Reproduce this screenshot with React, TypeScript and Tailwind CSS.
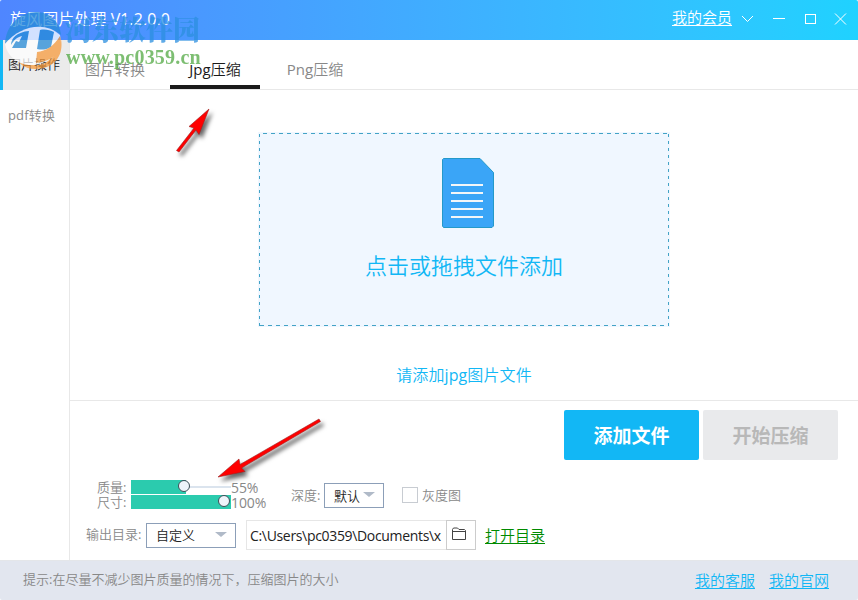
import { useState } from "react";

const tabs = [
  { name: "图片转换", width: "w-[90px]" },
  { name: "Jpg压缩", width: "w-[90px]" },
  { name: "Png压缩", width: "w-[110px]" },
];

const TitleBar = () => (
  <header className="flex h-10 shrink-0 items-center bg-linear-to-r from-[#4f86ff] to-[#1fd2ff] pl-[10px] text-white">
    <h1 className="mt-[-2px] text-[16px] leading-5 tracking-[0.080px]">旋风图片处理 V1.2.0.0</h1>
    <a href="#" className="mt-[-6px] mr-[10px] ml-auto text-[15px] leading-5 underline underline-offset-2">
      我的会员
    </a>
    <svg width="116" height="40" fill="none" stroke="currentColor" shapeRendering="crispEdges">
      <path d="M31 18.500h12M63.500 14.500h10v9h-10z" />
      <path d="M0 16l5.500 5.500L11 16M93 13.500l11 11M104 13.500l-11 11" shapeRendering="auto" />
    </svg>
  </header>
);

const Sidebar = () => (
  <nav className="w-[70px] shrink-0 border-r border-[#e8e8e8] text-[13px]">
    <div className="flex h-[50px] items-center border-l-3 border-[#12b7f5] bg-[#ebebeb] pl-[5px] text-[#1a1a1a]">
      图片操作
    </div>
    <div className="flex h-[50px] items-center pt-px pl-2 tracking-[0.150px] text-[#888]">pdf转换</div>
  </nav>
);

const DropZone = () => (
  <div className="relative mt-[42px] ml-[188px] flex h-[195px] w-[412px] flex-col items-center bg-[#f0f7ff]">
    <svg className="absolute inset-0" width="412" height="195" stroke="#43a3c6" shapeRendering="crispEdges">
      <path d="M5 1.500H411M2 193.500H411" strokeDasharray="4 4" />
      <path d="M1.500 2V194M410.500 2V194" strokeDasharray="3 4" />
    </svg>
    <svg className="mt-[26px] ml-2" width="52" height="70">
      <path d="M1.500 .5h36.500l13.500 14v53.500l-1.500 1.500h-48.500l-1-1.500V1.500z" fill="#3aa5f7" stroke="#2499c9" />
      <path d="M9 27h32M9 35h32M9 43h32M9 51h32M9 59h32" stroke="#f3f6f8" strokeWidth="2" />
    </svg>
    <p className="mt-[21px] text-[22px] leading-8 text-[#12b7f5]">点击或拖拽文件添加</p>
  </div>
);

const Slider = ({ label, value }: { label: string; value: number }) => (
  <div className="flex h-[15px] items-center">
    <span className="w-[34px] shrink-0 pt-[2px]">{label}:</span>
    <div className="relative flex h-[14px] w-[100px] items-center">
      <div className="h-[2px] w-full bg-[#dbe4ee]" />
      <div className="absolute left-0 h-[14px] bg-[#2bcbae]" style={{ width: `${value}%` }} />
      <div
        className="absolute top-0 size-3 rounded-full border-[1.500px] border-[#3c4e57] bg-[#eef4fa]"
        style={{ left: value * 0.89 - 2 }}
      />
    </div>
    <span className="pt-px text-[14px] tracking-[-0.100px]">{value}%</span>
  </div>
);

const Select = ({ value, className }: { value: string; className: string }) => (
  <div
    className={`flex h-[25px] items-center justify-between border border-[#8c9fb8] pt-[2px] pr-2 pl-[9px] text-[13px] text-[#222] ${className}`}
  >
    {value}
    <svg width="12" height="9">
      <path d="M0 0h12L6 5z" fill="#b0bac8" />
    </svg>
  </div>
);

const Settings = () => (
  <section className="flex h-[160px] flex-col border-t border-[#e8e8e8] text-[13px] text-[#888]">
    <div className="flex gap-1 pt-[9px] pl-[494px] font-['Noto_Sans_CJK_SC',sans-serif] text-[19px] font-bold">
      <button className="h-[50px] w-[135px] rounded-[2px] bg-[#12b7f5] text-white">添加文件</button>
      <button className="h-[50px] w-[135px] rounded-[2px] bg-[#e9eaec] text-[#b8b8b8]">开始压缩</button>
    </div>
    <div className="mt-[19px] flex items-start pl-[27px]">
      <div className="w-[194px]">
        <Slider label="质量" value={55} />
        <Slider label="尺寸" value={100} />
      </div>
      <span className="mt-[6px] w-[33px] leading-5">深度:</span>
      <Select value="默认" className="mt-[4px] w-[60px]" />
      <span className="mt-[8px] ml-[18px] size-4 border border-[#c8ccd2]" />
      <span className="mt-[6px] ml-1 leading-5">灰度图</span>
    </div>
    <div className="mt-[11px] flex items-center pl-4">
      <span className="w-[60px]">输出目录:</span>
      <Select value="自定义" className="w-[90px]" />
      <div className="ml-[10px] flex h-[30px] w-[200px] items-center overflow-hidden border border-r-0 border-[#e6e6e6] pl-[3px] text-[14px] tracking-[-0.330px] text-[#222]">
        C:\Users\pc0359\Documents\x
      </div>
      <button className="flex h-[30px] w-[30px] items-center justify-center border border-[#ccc] pr-1 pb-[3px]">
        <svg width="14" height="13" fill="none" stroke="#444">
          <path d="M.5 12.500v-10l1-1.500h4l1.500 1.500h5.500l1 1v9zM.5 4.500h13" />
        </svg>
      </button>
      <a href="#" className="ml-[9px] text-[15px] text-[#008a00] underline underline-offset-2">
        打开目录
      </a>
    </div>
  </section>
);

const Watermark = () => (
  <div className="pointer-events-none absolute top-3 left-1 flex opacity-75">
    <svg width="60" height="58">
      <path d="M1 32C2 12 17 0 32 0c14 0 24 10 25 23C44 11 20 13 1 32z" fill="#278bd8" />
      <path d="M10 42c12 17 40 17 47-15 3 17-7 30-26 30-10 0-18-6-21-15z" fill="#f79b3e" />
      <path d="M1 32C16 13 42 9 56 23c3 17-14 31-31 30C12 52 3 43 1 32z" fill="#fff" />
      <path d="M7 33c0-7 6-13 18-14l-3 17H8l4-7 3 1 3-6c-5 1-8 4-11 9z" fill="#278bd8" />
      <path d="M36 18c5-1 10 0 14 2l-3 15c-5 3-9 3-14 2z" fill="#278bd8" />
      <path d="M56 24c4 14-6 25-24 27l1-11c9-1 17-6 23-16z" fill="#f79b3e" />
    </svg>
    <div className="ml-px whitespace-nowrap">
      <p className="mt-[-1px] font-['Noto_Serif_CJK_SC','Noto_Sans_CJK_SC',serif] text-[27px] leading-9 font-black text-[#2c8fe0]">
        河东软件园
      </p>
      <p className="mt-[-2px] ml-px font-['Liberation_Serif',serif] text-[20px] leading-6 font-bold tracking-[0.200px] text-[#52a944]">
        www.pc0359.cn
      </p>
    </div>
  </div>
);

const Arrows = () => (
  <svg
    className="pointer-events-none absolute inset-0 drop-shadow-[3px_4px_2px_rgba(0,0,0,0.6)]"
    width="858"
    height="600"
    fill="#fe0000"
    stroke="#9b2020"
    strokeWidth=".6"
  >
    <path d="M209 109l-20 17.500 5 1.500-17.500 22.500 2.500 1.500 17-22 3 4.500z" />
    <path d="M218 477l21-18 1 5.500 79-45.500 1.500 2.500-79 46.500 3.500 3.500z" />
  </svg>
);

export default function App() {
  const [active, setActive] = useState("Jpg压缩");

  return (
    <div className="relative flex h-[600px] w-[858px] flex-col overflow-hidden rounded-[2px] bg-white font-['Open_Sans','Noto_Sans_CJK_SC_DemiLight','Noto_Sans_CJK_SC',sans-serif] whitespace-nowrap">
      <TitleBar />
      <div className="flex h-[520px]">
        <Sidebar />
        <main className="flex grow flex-col">
          <div className="flex h-[50px] gap-[10px] border-b border-[#e8e8e8] text-[15px]">
            {tabs.map((tab) => (
              <button
                key={tab.name}
                onClick={() => setActive(tab.name)}
                className={`${tab.width} border-b-4 pt-[14px] last:ml-[-10px] ${
                  active === tab.name ? "border-[#1a1a1a] text-[#1a1a1a]" : "border-transparent text-[#888]"
                }`}
              >
                {tab.name}
              </button>
            ))}
          </div>
          <div className="h-[310px]">
            <DropZone />
            <p className="mt-[36px] text-center text-[16px] leading-6 tracking-[0.100px] text-[#12b7f5]">
              请添加jpg图片文件
            </p>
          </div>
          <Settings />
        </main>
      </div>
      <footer className="flex h-10 shrink-0 items-center border-t border-[#e4e6e9] bg-[#e2e6ef] pr-[29px] pb-px pl-[23px] text-[13px] text-[#888]">
        <p>提示:在尽量不减少图片质量的情况下，压缩图片的大小</p>
        <div className="ml-auto flex gap-[14px] text-[15px] text-[#12b7f5] underline underline-offset-2">
          <a href="#">我的客服</a>
          <a href="#">我的官网</a>
        </div>
      </footer>
      <Watermark />
      <Arrows />
    </div>
  );
}
